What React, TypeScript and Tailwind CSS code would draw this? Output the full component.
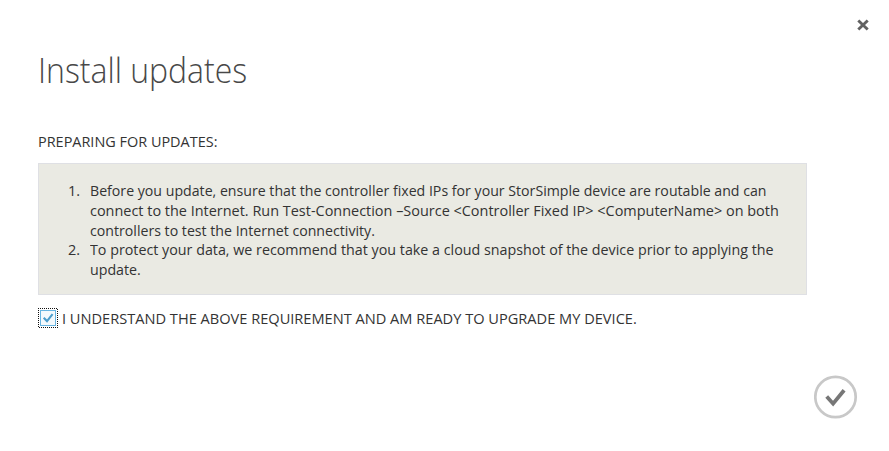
const line = "block w-max origin-left whitespace-nowrap";

export default function App() {
  return (
    <main className="flex h-[451px] w-[889px] flex-col overflow-hidden bg-white pl-[38px] font-['Open_Sans','Noto_Sans',sans-serif] text-[14.5px] leading-5 text-[#333]">
      <header className="flex h-[94px] justify-between">
        <h1 className="pt-[47px] text-[35px] font-light leading-[46px] text-[#484848]">
          <span className={`${line} scale-x-[0.913]`}>Install updates</span>
        </h1>
        <button aria-label="Close" className="mr-[20px] mt-[19px] h-3 w-3">
          <svg viewBox="0 0 12 12" className="h-3 w-3" fill="none" stroke="#626262" strokeWidth="2.9">
            <path d="M1.3 1.5 10.7 10.5M10.7 1.5 1.3 10.5" />
          </svg>
        </button>
      </header>
      <p className="mt-[37px] text-[15px]">
        <span className={`${line} scale-x-[0.963]`}>PREPARING FOR UPDATES:</span>
      </p>
      <ol className="mt-[12px] h-[132px] w-[769px] shrink-0 border border-[#dfe0e4] bg-[#eaeae3] pl-[29px] pt-[17px]">
        <li className="flex">
          <span className="w-[21.5px]">1.</span>
          <div>
            <span className={`${line} scale-x-[0.976]`}>Before you update, ensure that the controller fixed IPs for your StorSimple device are routable and can</span>
            <span className={`${line} scale-x-[0.996]`}>connect to the Internet. Run Test-Connection –Source &lt;Controller Fixed IP&gt; &lt;ComputerName&gt; on both</span>
            <span className={`${line} scale-x-[0.976]`}>controllers to test the Internet connectivity.</span>
          </div>
        </li>
        <li className="-mt-px flex">
          <span className="w-[21.5px]">2.</span>
          <div>
            <span className={`${line} scale-x-[0.985]`}>To protect your data, we recommend that you take a cloud snapshot of the device prior to applying the</span>
            <span className={`${line} scale-x-[0.98]`}>update.</span>
          </div>
        </li>
      </ol>
      <label className="mt-[13px] flex h-5 items-center text-[15px]">
        <svg viewBox="0 0 20 20" className="mr-[4px] h-5 w-5" fill="none">
          <path d="M0 .5H20M.5 0V20M1 19.5H20M19.5 1V20" stroke="#111" strokeDasharray="1 1" shapeRendering="crispEdges" />
          <rect x="2.5" y="2.5" width="15" height="15" fill="#f3f9fd" stroke="#67b4e1" />
          <path d="m5.7 9.7 3.3 3.4 5.6-7" stroke="#4b9dcc" strokeWidth="2.1" />
        </svg>
        <span className={`${line} scale-x-[0.973]`}>I UNDERSTAND THE ABOVE REQUIREMENT AND AM READY TO UPGRADE MY DEVICE.</span>
      </label>
      <button aria-label="Confirm" className="mr-[31px] mt-[47px] h-[44px] w-[44px] self-end">
        <svg viewBox="0 0 44 44" className="h-[44px] w-[44px]" fill="none">
          <circle cx="21.5" cy="22" r="20.2" stroke="#c8c8c8" strokeWidth="2.7" />
          <path d="m12.7 21.5 6.4 7.2 11-13.4" stroke="#777" strokeWidth="3.8" />
        </svg>
      </button>
    </main>
  );
}
